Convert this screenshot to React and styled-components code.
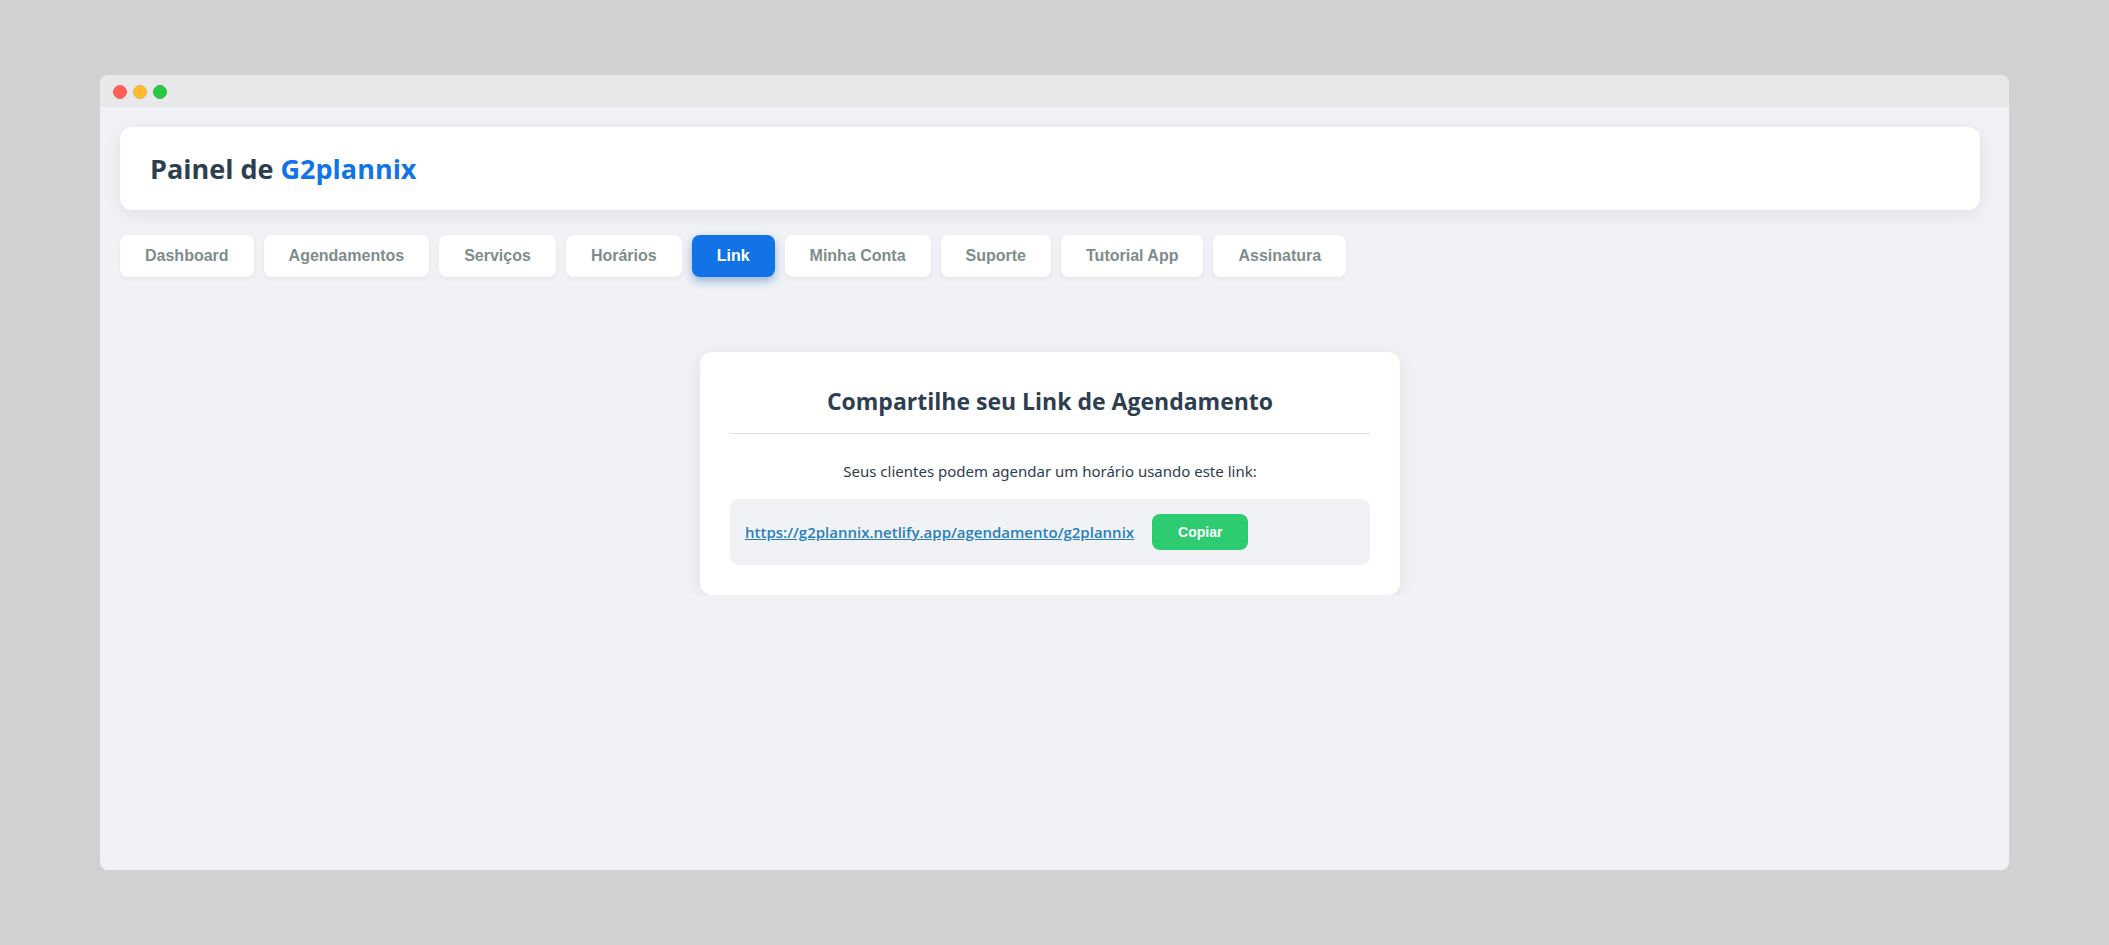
import React, { useState } from 'react';
import styled, { createGlobalStyle, css } from 'styled-components';

const GlobalStyle = createGlobalStyle`
  *, *::before, *::after { box-sizing: border-box; }
  body {
    margin: 0;
    background: #d1d1d1;
    color: #2c3e50;
    font-family: 'Segoe UI', 'Open Sans', 'Noto Sans', sans-serif;
  }
`;

const Desktop = styled.div`
  display: flex;
  min-height: 100vh;
  padding: 75px 100px;
`;

const Window = styled.div`
  flex: 1;
  min-width: 0;
  display: flex;
  flex-direction: column;
  overflow: hidden;
  border-radius: 8px;
  background: #f0f2f6;
`;

const TitleBar = styled.div`
  display: flex;
  align-items: center;
  gap: 6px;
  height: 32px;
  padding: 2px 13px 0;
  background: #e8e8e8;
`;

const Light = styled.span`
  width: 14px;
  height: 14px;
  border-radius: 50%;
  border: 1px solid ${({ $edge }) => $edge};
  background: ${({ $fill }) => $fill};
`;

const Page = styled.div`
  flex: 1;
  padding: 20px 29px 20px 20px;
`;

const Header = styled.header`
  display: flex;
  align-items: center;
  min-height: 83px;
  padding: 20px 30px;
  border-radius: 12px;
  background: #fff;
  box-shadow: 0 4px 20px rgba(0, 0, 0, 0.08);
`;

const Title = styled.h1`
  margin: 0;
  font-size: 27px;
  font-weight: 700;
  line-height: 40px;
`;

const Brand = styled.span`
  color: #1273e6;
`;

const Tabs = styled.nav`
  display: flex;
  flex-wrap: wrap;
  gap: 10px;
  margin-top: 25px;
`;

const Tab = styled.button`
  padding: 12px 25px;
  border: 0;
  border-radius: 8px;
  background: #fff;
  color: #7f8c8d;
  font-family: Arial, 'Liberation Sans', sans-serif;
  font-size: 16px;
  font-weight: 600;
  line-height: 18px;
  cursor: pointer;
  box-shadow: 0 2px 5px rgba(0, 0, 0, 0.05);

  ${({ $active }) =>
    $active &&
    css`
      background: #1273e6;
      color: #fff;
      box-shadow: 0 4px 10px rgba(10, 80, 170, 0.4);
    `}
`;

const Panel = styled.main`
  display: flex;
  justify-content: center;
  padding-top: 75px;
  overflow: hidden;
`;

const Card = styled.section`
  width: 100%;
  max-width: 700px;
  padding: 30px;
  border-radius: 12px;
  background: #fff;
  text-align: center;
  box-shadow: 0 4px 20px rgba(0, 0, 0, 0.08);
`;

const CardTitle = styled.h2`
  margin: 0 0 25px;
  padding-bottom: 12px;
  border-bottom: 1px solid #dcdee1;
  font-size: 23px;
  font-weight: 700;
  line-height: 39px;
`;

const Text = styled.p`
  margin: 0 0 15px;
  font-family: 'Segoe UI', 'Noto Sans', sans-serif;
  font-size: 15px;
  line-height: 25px;
`;

const LinkBox = styled.div`
  display: flex;
  flex-wrap: wrap;
  align-items: center;
  gap: 18px;
  padding: 15px;
  border-radius: 8px;
  background: #f0f2f6;
`;

const BookingLink = styled.a`
  color: #2980b9;
  font-size: 15px;
  font-weight: 600;
  line-height: 24px;
`;

const CopyButton = styled.button`
  padding: 10px 26px;
  border: 0;
  border-radius: 8px;
  background: #2ecc71;
  color: #fff;
  font-family: Arial, 'Liberation Sans', sans-serif;
  font-size: 14px;
  font-weight: 600;
  line-height: 16px;
  cursor: pointer;
`;

const LIGHTS = [
  { fill: '#ff5f57', edge: '#f0625c' },
  { fill: '#febc2e', edge: '#eab04c' },
  { fill: '#28c840', edge: '#35b94c' },
];

const TABS = [
  'Dashboard',
  'Agendamentos',
  'Serviços',
  'Horários',
  'Link',
  'Minha Conta',
  'Suporte',
  'Tutorial App',
  'Assinatura',
];

const BOOKING_URL = 'https://g2plannix.netlify.app/agendamento/g2plannix';

export default function App() {
  const [active, setActive] = useState('Link');

  return (
    <>
      <GlobalStyle />
      <Desktop>
        <Window>
          <TitleBar>
            {LIGHTS.map(({ fill, edge }) => (
              <Light key={fill} $fill={fill} $edge={edge} />
            ))}
          </TitleBar>
          <Page>
            <Header>
              <Title>
                Painel de <Brand>G2plannix</Brand>
              </Title>
            </Header>
            <Tabs>
              {TABS.map((name) => (
                <Tab
                  key={name}
                  type="button"
                  $active={name === active}
                  aria-current={name === active ? 'page' : undefined}
                  onClick={() => setActive(name)}
                >
                  {name}
                </Tab>
              ))}
            </Tabs>
            <Panel>
              <Card>
                <CardTitle>Compartilhe seu Link de Agendamento</CardTitle>
                <Text>Seus clientes podem agendar um horário usando este link:</Text>
                <LinkBox>
                  <BookingLink href={BOOKING_URL}>{BOOKING_URL}</BookingLink>
                  <CopyButton
                    type="button"
                    onClick={() => navigator.clipboard?.writeText(BOOKING_URL)}
                  >
                    Copiar
                  </CopyButton>
                </LinkBox>
              </Card>
            </Panel>
          </Page>
        </Window>
      </Desktop>
    </>
  );
}
